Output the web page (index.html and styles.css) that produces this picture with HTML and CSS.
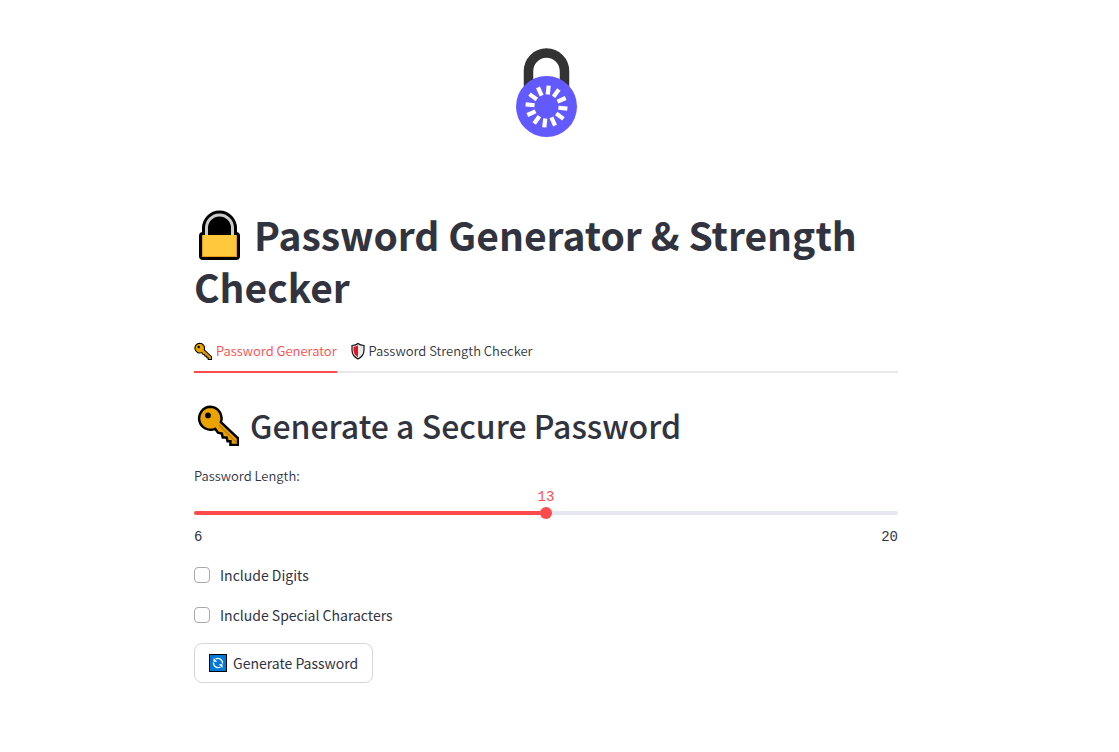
FILE: index.html
```html
<!DOCTYPE html>
<html lang="en">
<head>
<meta charset="utf-8">
<meta name="viewport" content="width=device-width, initial-scale=1">
<title>Password Generator &amp; Strength Checker</title>
<link rel="stylesheet" href="styles.css">
</head>
<body>
<svg class="symbols" aria-hidden="true">
  <symbol id="key" viewBox="2 1 44 44">
    <path d="M16 4a12 12 0 1 0 5 23l3 4 4 1 1 4h4l1 4h3v4h8v-7L27 20A12 12 0 0 0 16 4Z" fill="#eaa300" stroke="#000" stroke-width="2.6" stroke-linejoin="miter"/>
    <path d="m25 23 18 18" stroke="#bd7f00" stroke-width="1.6"/>
    <circle cx="13.500" cy="13" r="3" fill="#000"/>
  </symbol>
</svg>
<main class="page">
  <svg class="logo" viewBox="-1.500 0 64 90" role="img" aria-label="Padlock">
    <path d="M13 48V23a18 18 0 0 1 36 0v25" fill="none" stroke="#333" stroke-width="9.500"/>
    <circle cx="31" cy="58.500" r="30.500" fill="#6259ff"/>
    <g transform="translate(31 58.500) rotate(6)" stroke="#fff" stroke-width="4.200">
      <path id="ray" d="M0-21v9"/>
      <use href="#ray" transform="rotate(30)"/><use href="#ray" transform="rotate(60)"/>
      <use href="#ray" transform="rotate(90)"/><use href="#ray" transform="rotate(120)"/>
      <use href="#ray" transform="rotate(150)"/><use href="#ray" transform="rotate(180)"/>
      <use href="#ray" transform="rotate(210)"/><use href="#ray" transform="rotate(240)"/>
      <use href="#ray" transform="rotate(270)"/><use href="#ray" transform="rotate(300)"/>
      <use href="#ray" transform="rotate(330)"/>
    </g>
  </svg>

  <h1 class="title"><svg class="title-icon" viewBox="-1 -2 50 52" aria-hidden="true">
    <path d="M8 25V18a16.500 16.500 0 0 1 33 0v7" fill="#000" stroke="#000" stroke-width="2"/>
    <rect x="4" y="22" width="41" height="28" rx="4" fill="#000"/>
    <path d="M11.500 27V18a13 13 0 0 1 26 0v9" fill="none" stroke="#ccc" stroke-width="3"/>
    <rect x="7" y="25" width="35" height="22" rx="1" fill="#ffc83d"/>
    <path d="M7.500 26v20.500h34V26" fill="none" stroke="#e89b16" stroke-width="1"/>
  </svg>Password Generator &amp; Strength Checker</h1>

  <div class="tabs" role="tablist">
    <button class="tab tab-active" role="tab" aria-selected="true"><svg class="key-icon" aria-hidden="true"><use href="#key"/></svg>Password Generator</button>
    <button class="tab" role="tab" aria-selected="false"><svg class="shield-icon" viewBox="2 0 14 18" aria-hidden="true">
      <path d="M9 1.500Q11 3.300 15 3.500V8q0 6-6 9Q3 14 3 8V3.500Q7 3.300 9 1.500Z" fill="#e9e9e9" stroke="#111" stroke-width="1.200"/>
      <path d="M9 3.300v12Q4.500 12.700 4.500 8V4.800Q7.500 4.500 9 3.300Z" fill="#e81224"/>
    </svg>Password Strength Checker</button>
  </div>

  <section class="generator">
    <h2 class="heading"><svg class="heading-icon" aria-hidden="true"><use href="#key"/></svg>Generate a Secure Password</h2>
    <div class="slider">
      <label class="slider-label" for="length">Password Length:</label>
      <output class="slider-value" for="length">13</output>
      <input class="slider-input" id="length" type="range" min="6" max="20" value="13">
      <div class="slider-limits"><span>6</span><span>20</span></div>
    </div>
    <label class="check" for="digits"><input class="check-box" id="digits" type="checkbox">Include Digits</label>
    <label class="check" for="special"><input class="check-box" id="special" type="checkbox">Include Special Characters</label>
    <button class="generate"><svg class="generate-icon" viewBox="0 0 18 18" aria-hidden="true">
      <rect x=".5" y=".5" width="17" height="17" fill="#0078d7" stroke="#000"/>
      <path d="M6.500 5A4.700 4.700 0 0 1 13.500 9.500M11.500 13A4.700 4.700 0 0 1 4.500 8.500" fill="none" stroke="#fff" stroke-width="1.300"/>
      <path d="M4.500 4v3.800h3.800ZM13.500 14v-3.800H9.700Z" fill="#fff"/>
    </svg>Generate Password</button>
  </section>
</main>
</body>
</html>
```
FILE: styles.css
```css
* {
  box-sizing: border-box;
}

body {
  margin: 0;
  padding-right: 27px;
  background: #fff;
  color: #31333f;
  font-family: "Noto Sans CJK SC", "Noto Sans", sans-serif;
  font-size: 14px;
  line-height: 24px;
}

button {
  font: inherit;
  color: inherit;
  cursor: pointer;
}

.symbols {
  position: absolute;
  width: 0;
  height: 0;
}

.page {
  display: flex;
  flex-direction: column;
  max-width: 736px;
  margin: 0 auto;
  padding: 48px 16px;
}

.logo {
  width: 64px;
  height: 90px;
  align-self: center;
}

.title {
  margin: 70px 0 20px;
  font-size: 39px;
  font-weight: 700;
  line-height: 52px;
}

.title-icon {
  width: 50px;
  height: 52px;
  margin-right: 10px;
  vertical-align: bottom;
}

.tabs {
  display: flex;
  gap: 14px;
  border-bottom: 2px solid #e8e8ea;
}

.tab {
  display: flex;
  align-items: center;
  gap: 4px;
  height: 41px;
  margin-bottom: -2px;
  padding: 0 0 2px;
  border: 0;
  border-bottom: 2px solid transparent;
  background: none;
  font-size: 13px;
  font-weight: 350;
}

.tab-active {
  border-color: #ff4b4b;
  color: #ff4b4b;
}

.key-icon {
  width: 18px;
  height: 18px;
}

.shield-icon {
  width: 14px;
  height: 18px;
}

.generator {
  display: flex;
  flex-direction: column;
  align-items: flex-start;
  gap: 16px;
  padding-top: 28px;
}

.heading {
  display: flex;
  align-items: center;
  gap: 8px;
  margin: 0;
  font-size: 32px;
  font-weight: 500;
  line-height: 48px;
}

.heading-icon {
  width: 42px;
  height: 42px;
  margin: 0 3px;
}

.slider {
  display: flex;
  flex-direction: column;
  width: 100%;
}

.slider-label {
  font-size: 13px;
  font-weight: 350;
  line-height: 22px;
}

.slider-value,
.slider-limits {
  font-family: "Liberation Mono", monospace;
  font-size: 14px;
  line-height: 20px;
}

.slider-value {
  align-self: center;
  color: #ff4b4b;
}

.slider-input {
  width: 100%;
  height: 12px;
  margin: 0;
  appearance: none;
  background: none;
}

.slider-input::-webkit-slider-runnable-track {
  height: 4px;
  border-radius: 4px;
  background: linear-gradient(to right, #ff4b4b 50%, #e4e7f0 50%);
}

.slider-input::-webkit-slider-thumb {
  width: 12px;
  height: 12px;
  margin-top: -4px;
  appearance: none;
  border-radius: 50%;
  background: #ff4b4b;
}

.slider-limits {
  display: flex;
  justify-content: space-between;
  margin-top: 8px;
}

.check {
  display: flex;
  align-items: center;
  gap: 10px;
}

.check-box {
  width: 16px;
  height: 16px;
  margin: 0;
  appearance: none;
  border: 1px solid #a8a9af;
  border-radius: 4px;
}

.check-box:checked {
  border-color: #ff4b4b;
  background: #ff4b4b;
}

.generate {
  display: flex;
  align-items: center;
  gap: 6px;
  height: 40px;
  padding: 0 14px;
  border: 1px solid #d6d6d9;
  border-radius: 8px;
  background: #fff;
}

.generate-icon {
  width: 18px;
  height: 18px;
}
```
